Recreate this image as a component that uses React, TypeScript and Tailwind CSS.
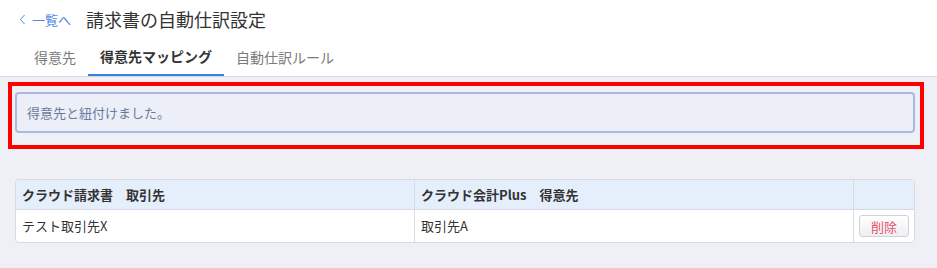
import React from "react";

export default function App() {
  const font = { fontFamily: '"Noto Sans CJK JP", "Noto Sans", sans-serif' };
  return (
    <div className="w-[937px] h-[268px] bg-[#eef0f5] overflow-hidden" style={font}>
      <div className="bg-white border-b border-[#d6d9e0]">
        <div className="flex items-center h-[38px] pl-[19px]">
          <a className="flex items-center text-[13px] text-[#4f86e8] leading-none">
            <svg width="7" height="11" viewBox="0 0 7 11" className="mr-[6px]">
              <path d="M5.5 1 L1.5 5.5 L5.5 10" fill="none" stroke="#4f86e8" strokeWidth="1" />
            </svg>
            一覧へ
          </a>
          <h1 className="ml-[15px] text-[18px] text-[#333] leading-none font-normal">請求書の自動仕訳設定</h1>
        </div>
        <div className="flex items-end h-[38px] pl-[22px] text-[14px]">
          <div className="px-[12px] h-[38px] flex items-center text-[#7a7a7a]">得意先</div>
          <div className="px-[12px] h-[38px] flex items-center font-bold text-[#333] border-b-2 border-[#3d7de0]">
            得意先マッピング
          </div>
          <div className="px-[12px] h-[38px] flex items-center text-[#7a7a7a]">自動仕訳ルール</div>
        </div>
      </div>
      <div className="pt-[5px]">
        <div className="ml-[8px] w-[916px] h-[67px] border-4 border-[#ff0000] pt-[6px] pl-[3px] pr-[5px]">
          <div className="h-[41px] rounded-[4px] border-2 border-[#a9bbdc] bg-[#eceff7] flex items-center pl-[10px] text-[13px] text-[#6b7a9c]">
            得意先と紐付けました。
          </div>
        </div>
        <div className="ml-[15px] mt-[30px] w-[900px] rounded-[4px] border border-[#d5dae3] bg-white overflow-hidden text-[13px] text-[#333]">
          <div className="flex h-[30px] bg-[#e5eefb] border-b border-[#d5dae3] font-bold">
            <div className="w-[399px] border-r border-[#d5dae3] flex items-center pl-[6px]">クラウド請求書　取引先</div>
            <div className="w-[439px] border-r border-[#d5dae3] flex items-center pl-[6px]">クラウド会計Plus　得意先</div>
            <div className="flex-1"></div>
          </div>
          <div className="flex h-[32px]">
            <div className="w-[399px] border-r border-[#d5dae3] flex items-center pl-[6px]">テスト取引先X</div>
            <div className="w-[439px] border-r border-[#d5dae3] flex items-center pl-[6px]">取引先A</div>
            <div className="flex-1 flex items-center pl-[5px]">
              <button className="w-[50px] h-[22px] rounded-[3px] border border-[#cfd2d8] bg-gradient-to-b from-white to-[#eeeff2] text-[13px] text-[#e5536a] leading-none">
                削除
              </button>
            </div>
          </div>
        </div>
      </div>
    </div>
  );
}
